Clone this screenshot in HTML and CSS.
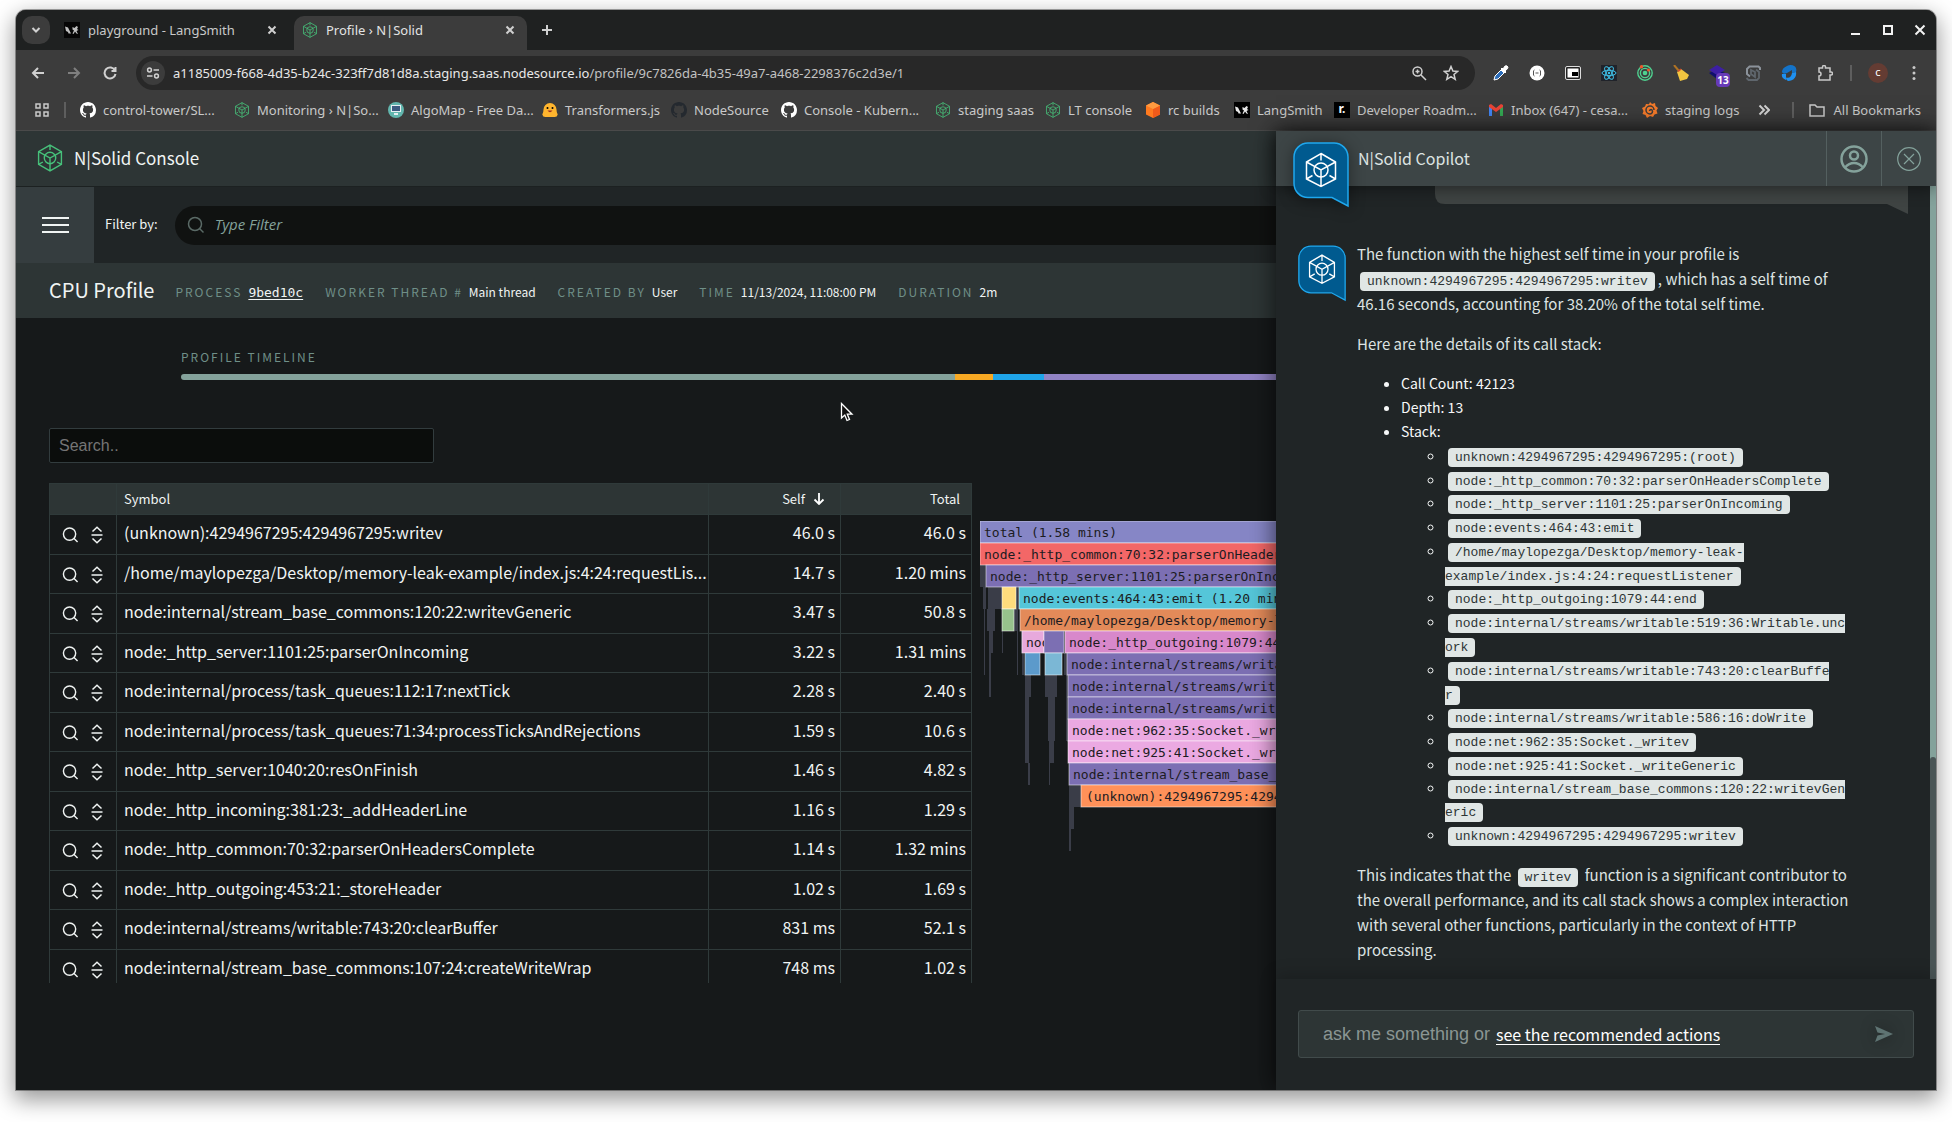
FILE: index.html
```html
<!DOCTYPE html>
<html lang="en">
<head>
<meta charset="utf-8">
<title>Profile › N|Solid</title>
<link rel="stylesheet" href="styles.css">
</head>
<body>
<svg class="defs" width="0" height="0" aria-hidden="true">
  <symbol id="cube" viewBox="0 0 24 26"><path d="M12 1 22.6 7v12L12 25 1.4 19V7zM12 1v4.5M12 13v12M1.4 7 12 13l10.600-6M1.400 19l4-2.300M22.600 19l-4-2.300" /><circle cx="12" cy="13" r="5.300"/></symbol>
  <symbol id="github" viewBox="0 0 16 16"><path d="M8 0C3.580 0 0 3.580 0 8c0 3.540 2.290 6.530 5.470 7.590.4.070.55-.17.55-.38 0-.19-.01-.82-.01-1.490-2.010.37-2.530-.49-2.690-.94-.09-.23-.48-.94-.82-1.130-.28-.15-.68-.52-.01-.53.63-.01 1.080.58 1.230.82.72 1.210 1.870.87 2.330.66.070-.52.28-.87.51-1.070-1.780-.2-3.640-.89-3.640-3.950 0-.87.31-1.590.82-2.150-.08-.2-.36-1.020.08-2.120 0 0 .67-.21 2.200.82.64-.18 1.320-.27 2-.27s1.360.09 2 .27c1.530-1.040 2.200-.82 2.200-.82.44 1.100.16 1.920.08 2.120.51.56.82 1.270.82 2.150 0 3.070-1.870 3.750-3.650 3.950.29.25.54.73.54 1.480 0 1.070-.01 1.930-.01 2.200 0 .21.15.46.55.38A8.010 8.010 0 0 0 16 8c0-4.420-3.580-8-8-8z"/></symbol>
  <symbol id="langsmith" viewBox="0 0 16 16"><path fill="#000" d="M0 0h16v16H0z"/><path fill="#e8e8e8" d="M1 4.500l3 1 1.500 3 1.500 3H4.500l-.5-1.500-2-1zM8.500 5l2 1 2-2 1.500 1-1 2 1.500 1-2 1 1.500 3-1.500-.5-1.500-2-1.500 2.500-1-.5 1.500-3-1.500-1z"/></symbol>
  <symbol id="x" viewBox="0 0 10 10"><path d="M1.500 1.500l7 7M8.500 1.500l-7 7"/></symbol>
  <symbol id="search" viewBox="0 0 18 18"><circle cx="8" cy="8" r="6.500"/><path d="M12.500 12.500 16.500 16.500"/></symbol>
  <symbol id="expand" viewBox="0 0 12 18"><path d="M1.500 5.500 6 1.200l4.500 4.300M.5 9h11M1.500 12.500 6 16.800l4.500-4.300"/></symbol>
  <symbol id="bubble" viewBox="0 0 56 66"><path fill="#005a8f" stroke="#1fa8ee" stroke-width="1.500" d="M15 1h26a14 14 0 0 1 14 14v49L39 55.500H15A14 14 0 0 1 1 41.500V15A14 14 0 0 1 15 1z"/><g fill="none" stroke="#fff" stroke-width="1.500"><path d="M28 11.500 42.500 20v17L28 44.500 13.500 37V20zM28 11.500v7M28 28v16.500M13.500 20 28 28l14.500-8M13.500 37l6-3.500M42.500 37l-6-3.500"/><circle cx="28" cy="28" r="7"/></g></symbol>
</svg>
<div class="window">
  <header class="chrome">
    <div class="tabs">
      <button class="tab-search" aria-label="Search tabs"><svg width="10" height="10" viewBox="0 0 10 10"><path d="M1.500 3 5 6.500 8.500 3"/></svg></button>
      <div class="tab"><svg class="fav dim" width="16" height="16"><use href="#langsmith"/></svg><span>playground - LangSmith</span><button aria-label="Close tab"><svg width="10" height="10"><use href="#x"/></svg></button></div>
      <div class="tab active"><svg class="fav cube" width="16" height="16"><use href="#cube"/></svg><span>Profile › N|Solid</span><button aria-label="Close tab"><svg width="10" height="10"><use href="#x"/></svg></button></div>
      <button class="new-tab" aria-label="New tab"><svg width="12" height="12" viewBox="0 0 12 12"><path d="M6 1v10M1 6h10"/></svg></button>
      <div class="controls">
        <button aria-label="Minimize"><svg width="12" height="12" viewBox="0 0 12 12"><path d="M1 10h9"/></svg></button>
        <button aria-label="Maximize"><svg width="12" height="12" viewBox="0 0 12 12"><path d="M2 2h8v8H2z"/></svg></button>
        <button aria-label="Close"><svg width="12" height="12" viewBox="0 0 12 12"><path d="M1.500 1.500l9 9M10.500 1.500l-9 9"/></svg></button>
      </div>
    </div>
    <div class="toolbar">
      <div class="nav">
        <button aria-label="Back"><svg width="14" height="14" viewBox="0 0 14 14"><path d="M13 7H2M7 2 2 7l5 5"/></svg></button>
        <button class="off" aria-label="Forward"><svg width="14" height="14" viewBox="0 0 14 14"><path d="M1 7h11M7 2l5 5-5 5"/></svg></button>
        <button aria-label="Reload"><svg width="14" height="14" viewBox="0 0 14 14"><path d="M12 4.500A5.500 5.500 0 1 0 12.500 8M12.500 1v4h-4"/></svg></button>
      </div>
      <div class="url">
        <button class="site" aria-label="Site information"><svg width="14" height="14" viewBox="0 0 14 14"><circle cx="3.500" cy="4" r="1.900"/><path d="M7.500 4H13M1 10h5.500"/><circle cx="10.500" cy="10" r="1.900"/></svg></button>
        <span class="address">a1185009-f668-4d35-b24c-323ff7d81d8a.staging.saas.nodesource.io<span>/profile/9c7826da-4b35-49a7-a468-2298376c2d3e/1</span></span>
        <button aria-label="Zoom"><svg width="16" height="16" viewBox="0 0 16 16"><circle cx="6.500" cy="6.500" r="4.500"/><path d="M10 10l5 5M4.500 6.500h4M6.500 4.500v4"/></svg></button>
        <button aria-label="Bookmark this tab"><svg width="16" height="16" viewBox="0 0 16 16"><path d="M8 1.500 9.900 6l4.800.400-3.700 3.100 1.200 4.800L8 11.700l-4.200 2.600L5 9.500 1.300 6.400 6.100 6z"/></svg></button>
      </div>
      <div class="exts">
        <svg viewBox="0 0 16 16"><path d="M1 15l1-4 6-6 3 3-6 6z" fill="#2b6cb8" stroke="#fff"/><path d="M8 4l1-1 1 1 2-3q2-1 3 1 0 2-2 3l-1 1 1 1-1 1z" fill="#fff" stroke="#fff"/></svg>
        <svg viewBox="0 0 16 16"><circle cx="8" cy="8" r="7.500" fill="#fff"/><path d="M5.500 5Q4 5 4.500 8 4 11 5.500 11M10.500 5Q12 5 11.500 8q.5 3-1 3M6.500 8h3" fill="none" stroke="#555"/></svg>
        <svg viewBox="0 0 16 16"><rect x=".5" y="1.500" width="15" height="13" rx="1.500" fill="#222" stroke="#ddd"/><path fill="#fff" d="M2.500 3.500h11v9h-11z"/><path d="M7 7h6v4H7z"/></svg>
        <svg viewBox="0 0 16 16"><path fill="#20232a" d="M0 0h16v16H0z"/><g fill="none" stroke="#3fc1e8"><ellipse cx="8" cy="8" rx="7" ry="2.700"/><ellipse cx="8" cy="8" rx="7" ry="2.700" transform="rotate(60 8 8)"/><ellipse cx="8" cy="8" rx="7" ry="2.700" transform="rotate(120 8 8)"/></g><circle cx="8" cy="8" r="1.200" fill="#3fc1e8"/></svg>
        <svg viewBox="0 0 16 16"><g fill="none" stroke="#4fd08f" stroke-width="1.400"><circle cx="8" cy="8" r="7.200"/><circle cx="8" cy="8" r="4.600"/></g><circle cx="8" cy="8" r="2.300" fill="#4fd08f"/><circle cx="4.500" cy="1.800" r="1.700" fill="#f0562b"/><circle cx="11.500" cy="5" r="1.500" fill="#f0562b"/></svg>
        <svg viewBox="0 0 16 16"><path d="M1 0l5 6" stroke="#b07324" stroke-width="2"/><path d="M4 7l4-3 8 6-2 4-7 2z" fill="#f2c640"/><path d="M5 6.500 8 4" stroke="#d6462d" stroke-width="1.500"/></svg>
        <span class="stack"><svg viewBox="0 0 16 16"><path d="M0 8l8-4 8 4-8 6z" fill="#10106b"/><path d="M0 5l8-5 8 5-8 5z" fill="#3d1fa4"/></svg><b>13</b></span>
        <svg viewBox="0 0 16 16"><path d="M15 5V3l-1.500-1.500h-9L2 4v5l3 2.500" fill="none" stroke="#8b929a" stroke-width="2"/><path d="M11 4.500 14 7v6l-2 2H3.500L1.500 13M6 5v4l4 3V7z" fill="none" stroke="#5f666d" stroke-width="1.800"/></svg>
        <svg viewBox="0 0 16 16"><path d="M6 1q4-2 8 .5 2 2 1 5.500l-4 1V5L6 8Q2 10 1 7q0-4 5-6z" fill="#1473c8"/><path d="M15 7q1 6-5 8.500-5 1.500-5-3 5 1.500 6-4.500zM1 9l4 0v6q-5-2-4-6z" fill="#1e90f0"/></svg>
        <svg viewBox="0 0 16 16"><path d="M2 3h3.500V2a1.500 1.500 0 0 1 3 0v1H13v4h1a1.500 1.500 0 0 1 0 3h-1v5H2v-4q2 0 2-2t-2-2z" fill="none" stroke="#c9c9c9" stroke-width="1.500"/></svg>
        <i class="bar"></i>
        <span class="avatar">c</span>
        <svg class="dots" viewBox="0 0 16 16"><circle cx="8" cy="2.500" r="1.500"/><circle cx="8" cy="8" r="1.500"/><circle cx="8" cy="13.500" r="1.500"/></svg>
      </div>
    </div>
    <nav class="bookmarks">
      <svg class="apps" width="16" height="16" viewBox="0 0 16 16"><path d="M2 2h4v4H2zM10 2h4v4h-4zM2 10h4v4H2zM10 10h4v4h-4z"/></svg>
      <i class="bar"></i>
      <div class="links">
        <a href="#"><svg class="white"><use href="#github"/></svg>control-tower/SL...</a>
        <a href="#"><svg class="cube"><use href="#cube"/></svg>Monitoring › N|So...</a>
        <a href="#"><svg viewBox="0 0 16 16"><circle cx="8" cy="8" r="8" fill="#62b6ae"/><path fill="#e6eef2" d="M3 3h10v7H3zM6 11h4v2H6z"/><path fill="#3b5b80" d="M4 4h8v5H4z"/></svg>AlgoMap - Free Da...</a>
        <a href="#"><svg viewBox="0 0 16 16"><path d="M8 1a6.500 6.500 0 0 1 6.500 6.500q0 3 1.200 5-.5 2.500-3 2.500H3.300Q.8 15 .3 12.500q1.200-2 1.200-5A6.500 6.500 0 0 1 8 1z" fill="#ffb52e"/><circle cx="5.500" cy="6" r="1"/><circle cx="10.500" cy="6" r="1"/><path d="M5.500 8.500q2.500 3.500 5 0z" fill="#a03020"/></svg>Transformers.js</a>
        <a href="#"><svg class="dark"><use href="#github"/></svg>NodeSource</a>
        <a href="#"><svg class="white"><use href="#github"/></svg>Console - Kubern...</a>
        <a href="#"><svg class="cube"><use href="#cube"/></svg>staging saas</a>
        <a href="#"><svg class="cube"><use href="#cube"/></svg>LT console</a>
        <a href="#"><svg viewBox="0 0 16 16"><path d="M8 0l7 3.500v9L8 16l-7-3.500v-9z" fill="#ff7a1f"/><path d="M8 7l7-3.500v9L8 16z" fill="#f05a1a"/><path d="M8 0l7 3.500L8 7 1 3.500z" fill="#ff9a40"/></svg>rc builds</a>
        <a href="#"><svg><use href="#langsmith"/></svg>LangSmith</a>
        <a href="#"><span class="rm">r.</span>Developer Roadm...</a>
        <a href="#"><svg viewBox="0 0 16 16"><path fill="#4285f4" d="M1 4l3 2v8H1z"/><path fill="#34a853" d="M12 6l3-2v10h-3z"/><path fill="#ea4335" d="M1 3l2-1 5 4 5-4 2 1v2l-7 5-7-5z"/></svg>Inbox (647) - cesa...</a>
        <a href="#"><svg viewBox="0 0 16 16"><path d="M8 0l2 2 3-1 .5 3L16 6l-1.500 2.500 1 3-3 1L11 15l-3-1-3 2-1.500-3-3-1 1-3L0 6l3-1.500L4 2l3 .3z" fill="#f47a2a"/><path d="M12 8a4 4 0 1 0-4 4 2.500 2.500 0 0 0 2-4 1.500 1.500 0 0 0-2.500 1" fill="none" stroke="#3c3c3c" stroke-width="1.500"/></svg>staging logs</a>
      </div>
      <button class="more" aria-label="More bookmarks"><svg width="12" height="12" viewBox="0 0 12 12"><path d="M1.500 1.500 6 6l-4.500 4.500M6.500 1.500 11 6l-4.500 4.500"/></svg></button>
      <i class="bar"></i>
      <a class="all" href="#"><svg viewBox="0 0 16 16"><path d="M1 3h5l2 2h7v9H1z" fill="none" stroke="#c9c9c9" stroke-width="1.500"/></svg>All Bookmarks</a>
    </nav>
  </header>

  <div class="app">
    <div class="brand"><svg class="cube" width="26" height="28"><use href="#cube"/></svg><span>N|Solid Console</span></div>
    <div class="filter">
      <button class="burger" aria-label="Menu"><i></i><i></i><i></i></button>
      <label for="filter">Filter by:</label>
      <div class="pill"><svg width="18" height="18"><use href="#search"/></svg><input id="filter" type="text" placeholder="Type Filter"></div>
    </div>
    <div class="title">
      <h1>CPU Profile</h1>
      <dl>
        <div><dt>Process</dt><dd><a href="#">9bed10c</a></dd></div>
        <div><dt>Worker thread #</dt><dd>Main thread</dd></div>
        <div><dt>Created by</dt><dd>User</dd></div>
        <div><dt>Time</dt><dd>11/13/2024, 11:08:00 PM</dd></div>
        <div><dt>Duration</dt><dd>2m</dd></div>
      </dl>
    </div>
    <main>
      <section class="timeline">
        <h2>Profile timeline</h2>
        <div class="track"><i style="width:48.700%"></i><i style="width:2.400%"></i><i style="width:3.200%"></i><i style="width:45.700%"></i></div>
      </section>
      <input class="find" type="text" placeholder="Search.." aria-label="Search">
      <div class="profile">
        <div class="scroller">
          <table>
            <thead><tr><th></th><th>Symbol</th><th>Self<svg width="12" height="12" viewBox="0 0 12 12"><path d="M6 0v11M1.500 6.500 6 11l4.500-4.500"/></svg></th><th>Total</th></tr></thead>
            <tbody>
              <tr><td><svg><use href="#search"/></svg><svg><use href="#expand"/></svg></td><td>(unknown):4294967295:4294967295:writev</td><td>46.0 s</td><td>46.0 s</td></tr>
              <tr><td><svg><use href="#search"/></svg><svg><use href="#expand"/></svg></td><td>/home/maylopezga/Desktop/memory-leak-example/index.js:4:24:requestLis...</td><td>14.7 s</td><td>1.20 mins</td></tr>
              <tr><td><svg><use href="#search"/></svg><svg><use href="#expand"/></svg></td><td>node:internal/stream_base_commons:120:22:writevGeneric</td><td>3.47 s</td><td>50.8 s</td></tr>
              <tr><td><svg><use href="#search"/></svg><svg><use href="#expand"/></svg></td><td>node:_http_server:1101:25:parserOnIncoming</td><td>3.22 s</td><td>1.31 mins</td></tr>
              <tr><td><svg><use href="#search"/></svg><svg><use href="#expand"/></svg></td><td>node:internal/process/task_queues:112:17:nextTick</td><td>2.28 s</td><td>2.40 s</td></tr>
              <tr><td><svg><use href="#search"/></svg><svg><use href="#expand"/></svg></td><td>node:internal/process/task_queues:71:34:processTicksAndRejections</td><td>1.59 s</td><td>10.6 s</td></tr>
              <tr><td><svg><use href="#search"/></svg><svg><use href="#expand"/></svg></td><td>node:_http_server:1040:20:resOnFinish</td><td>1.46 s</td><td>4.82 s</td></tr>
              <tr><td><svg><use href="#search"/></svg><svg><use href="#expand"/></svg></td><td>node:_http_incoming:381:23:_addHeaderLine</td><td>1.16 s</td><td>1.29 s</td></tr>
              <tr><td><svg><use href="#search"/></svg><svg><use href="#expand"/></svg></td><td>node:_http_common:70:32:parserOnHeadersComplete</td><td>1.14 s</td><td>1.32 mins</td></tr>
              <tr><td><svg><use href="#search"/></svg><svg><use href="#expand"/></svg></td><td>node:_http_outgoing:453:21:_storeHeader</td><td>1.02 s</td><td>1.69 s</td></tr>
              <tr><td><svg><use href="#search"/></svg><svg><use href="#expand"/></svg></td><td>node:internal/streams/writable:743:20:clearBuffer</td><td>831 ms</td><td>52.1 s</td></tr>
              <tr><td><svg><use href="#search"/></svg><svg><use href="#expand"/></svg></td><td>node:internal/stream_base_commons:107:24:createWriteWrap</td><td>748 ms</td><td>1.02 s</td></tr>
            </tbody>
          </table>
        </div>
        <svg class="flame">
          <g fill="#3a3d48">
            <path d="M0 44h6v22H0zM3 66h3v22H3zM8 66h14v22H8zM4 88h1v66H4zM7 88h8v22H7zM9 110h4v22H9zM9 132h2v44H9zM22 110h1v22h-1zM36 66h3v22h-3zM34 88h4v22h-4zM37 110h1v44h-1zM41 110h2v22h-2zM42 132h2v22h-2zM45 154h6v22h-6zM45 176h4v66h-4zM48 242h2v22h-2zM65 154h12v22H65zM68 176h7v44h-7zM69 220h5v22h-5zM69 242h1v22h-1zM84 132h3v22h-3zM86 154h2v66h-2zM89 264h12v22H89zM89 286h5v22h-5zM89 308h2v22h-2z"/>
          </g>
          <g class="bars">
            <rect x="0" y="0" width="790" height="22" fill="#8686c6"/><rect x="0" y="22" width="780" height="22" fill="#f36767"/>
            <rect x="6" y="44" width="770" height="22" fill="#7c6fb3"/>
            <rect x="22" y="66" width="14" height="22" fill="#ffdc7d"/><rect x="39" y="66" width="730" height="22" fill="#55c6d9"/>
            <rect x="22" y="88" width="12" height="22" fill="#97c28c"/><rect x="40" y="88" width="720" height="22" fill="#e38a59"/>
            <rect x="42" y="110" width="22" height="22" fill="#e7a9dc"/><rect x="64" y="110" width="20" height="22" fill="#7c6fb3"/><rect x="85" y="110" width="640" height="22" fill="#d888cb"/>
            <rect x="45" y="132" width="15" height="22" fill="#5c9acb"/><rect x="65" y="132" width="17" height="22" fill="#7bb7d5"/><rect x="87" y="132" width="640" height="22" fill="#7c6fb3"/>
            <rect x="88" y="154" width="640" height="22" fill="#7c6fb3"/><rect x="88" y="176" width="640" height="22" fill="#7c6fb3"/>
            <rect x="88" y="198" width="640" height="22" fill="#eba9e2"/><rect x="88" y="220" width="640" height="22" fill="#eba9e2"/>
            <rect x="89" y="242" width="640" height="22" fill="#7c6fb3"/><rect x="101" y="264" width="620" height="22" fill="#ff9159"/>
          </g>
          <g class="names">
            <text x="4" y="16">total (1.58 mins)</text>
            <text x="4" y="38">node:_http_common:70:32:parserOnHeadersComplete (1.32 mins)</text>
            <text x="10" y="60">node:_http_server:1101:25:parserOnIncoming (1.31 mins)</text>
            <text x="43" y="82">node:events:464:43:emit (1.20 mins)</text>
            <text x="44" y="104">/home/maylopezga/Desktop/memory-leak-example/index.js:4:24</text>
            <svg x="42" y="110" width="22" height="22"><text x="4" y="16">node</text></svg>
            <text x="89" y="126">node:_http_outgoing:1079:44:end</text>
            <text x="91" y="148">node:internal/streams/writable:519:36</text>
            <text x="92" y="170">node:internal/streams/writable:743:20</text>
            <text x="92" y="192">node:internal/streams/writable:586:16</text>
            <text x="92" y="214">node:net:962:35:Socket._writev</text>
            <text x="92" y="236">node:net:925:41:Socket._writeGeneric</text>
            <text x="93" y="258">node:internal/stream_base_commons:120:22</text>
            <text x="106" y="280">(unknown):4294967295:4294967295:writev</text>
          </g>
        </svg>
      </div>
    </main>

    <aside class="copilot">
      <header>
        <svg class="bubble big"><use href="#bubble"/></svg>
        <h2>N|Solid Copilot</h2>
        <button aria-label="Account"><svg width="28" height="28" viewBox="0 0 28 28" stroke-width="2.500"><circle cx="14" cy="14" r="12.500"/><circle cx="14" cy="10.500" r="4"/><path d="M5 22.500q4-4.500 9-4.500t9 4.500"/></svg></button>
        <button aria-label="Close"><svg width="24" height="24" viewBox="0 0 24 24" stroke-width="1.200"><circle cx="12" cy="12" r="11.300"/><path d="M7 7l10 10M17 7 7 17"/></svg></button>
      </header>
      <div class="chat">
        <div class="log">
          <svg class="asked" width="473" height="28" viewBox="0 0 473 28"><path d="M0 0h473v28l-21-10H10Q0 18 0 8z"/></svg>
          <div class="reply">
            <svg class="bubble"><use href="#bubble"/></svg>
            <article>
              <p>The function with the highest self time in your profile is <code>unknown:4294967295:4294967295:writev</code>, which has a self time of 46.16 seconds, accounting for 38.20% of the total self time.</p>
              <p>Here are the details of its call stack:</p>
              <ul>
                <li>Call Count: 42123</li>
                <li>Depth: 13</li>
                <li>Stack:
                  <ul>
                    <li><code>unknown:4294967295:4294967295:(root)</code></li>
                    <li><code>node:_http_common:70:32:parserOnHeadersComplete</code></li>
                    <li><code>node:_http_server:1101:25:parserOnIncoming</code></li>
                    <li><code>node:events:464:43:emit</code></li>
                    <li><code>/home/maylopezga/Desktop/memory-leak-example/index.js:4:24:requestListener</code></li>
                    <li><code>node:_http_outgoing:1079:44:end</code></li>
                    <li><code>node:internal/streams/writable:519:36:Writable.uncork</code></li>
                    <li><code>node:internal/streams/writable:743:20:clearBuffer</code></li>
                    <li><code>node:internal/streams/writable:586:16:doWrite</code></li>
                    <li><code>node:net:962:35:Socket._writev</code></li>
                    <li><code>node:net:925:41:Socket._writeGeneric</code></li>
                    <li><code>node:internal/stream_base_commons:120:22:writevGeneric</code></li>
                    <li><code>unknown:4294967295:4294967295:writev</code></li>
                  </ul>
                </li>
              </ul>
              <p>This indicates that the <code>writev</code> function is a significant contributor to the overall performance, and its call stack shows a complex interaction with several other functions, particularly in the context of HTTP processing.</p>
            </article>
          </div>
        </div>
        <div class="rail"><i></i></div>
      </div>
      <form>
        <div class="ask">
          <input type="text" placeholder="ask me something or" aria-label="Message">
          <a href="#">see the recommended actions</a>
          <button type="button" aria-label="Send"><svg width="18" height="18" viewBox="0 0 18 18"><path d="M0 1l18 8-18 8 2.500-6.500L10 9 2.500 7.500z"/></svg></button>
        </div>
      </form>
    </aside>
  </div>
  <svg class="pointer" width="14" height="20" viewBox="0 0 14 20"><path d="M1.500 1.500v14.500l3.300-3 2.200 5.500 2.500-1-2.200-5.300h4.700z" fill="#111" stroke="#fff" stroke-width="1.300"/></svg>
</div>
</body>
</html>
```
FILE: styles.css
```css
* { box-sizing: border-box; }
html, body { height: 100%; margin: 0; }
body {
  display: flex;
  padding: 10px 16px 32px;
  background: #fff;
  color: #f0f4f3;
  font: 16px/24px "Noto Sans CJK SC", "Noto Sans", sans-serif;
}
button { padding: 0; border: 0; background: none; color: inherit; font: inherit; display: flex; align-items: center; justify-content: center; }
input { border: 0; outline: 0; background: none; }
h1, h2, dl, dd, p, ul { margin: 0; font-weight: 400; }
a { color: inherit; text-decoration: none; }
svg { display: block; flex: none; }
.defs { position: absolute; }
.cube { fill: none; stroke: #46c07a; stroke-width: 1.300; }

.window {
  position: relative;
  flex: 1;
  min-width: 0;
  display: flex;
  flex-direction: column;
  overflow: hidden;
  border-radius: 10px 10px 0 0;
  background: #16191a;
  box-shadow: 0 0 0 1px #0005, 0 8px 22px 2px #0006;
}

/* browser frame */
.chrome { background: #3c3c3c; color: #c9c9c9; font: 13px/20px "Noto Sans", sans-serif; border-bottom: 1px solid #4a4a4a; }
.chrome button svg { fill: none; stroke: #d0d0d0; stroke-width: 2; }
.tabs { display: flex; height: 40px; padding: 6px 10px 0 6px; background: #1f2121; }
.tab-search { width: 28px; height: 28px; border-radius: 10px; background: #3c3c3c; }
.tab { display: flex; align-items: center; gap: 8px; width: 233px; height: 34px; padding: 0 12px 6px 8px; margin-left: 6px; }
.tab span { flex: 1; white-space: nowrap; }
.tab.active { margin-left: 5px; border-radius: 10px 10px 0 0; background: #3c3c3c; color: #e3e3e3; }
.tab .dim { opacity: .8; }
.new-tab { width: 40px; height: 28px; }
.controls { display: flex; gap: 20px; margin-left: auto; height: 28px; }
.controls button svg { stroke: #f2f2f2; }
.toolbar { display: flex; align-items: center; height: 46px; padding: 0 14px 0 12px; }
.nav { display: flex; width: 108px; }
.nav button { width: 20px; height: 20px; margin-right: 16px; }
.nav .off { opacity: .45; }
.url { flex: 1; display: flex; align-items: center; gap: 16px; height: 34px; padding: 0 16px 0 5px; border-radius: 17px; background: #282828; }
.url .site { width: 24px; height: 24px; border-radius: 12px; background: #3c3c3c; }
.url button svg { stroke-width: 1.500; }
.address { flex: 1; margin-left: -8px; color: #e8e8e8; }
.address span { color: #c2c2c2; }
.exts { display: flex; align-items: center; gap: 20px; margin-left: 18px; }
.exts svg { width: 16px; height: 16px; }
.exts .dots { fill: #c9c9c9; }
.bar { width: 2px; height: 16px; background: #5e5e5e; }
.exts .bar { margin: 0 -4px 0 -3px; }
.stack { position: relative; }
.stack b { position: absolute; left: 7px; top: 8px; width: 14px; border-radius: 4px; background: #673ab7; color: #fff; font-size: 10px; line-height: 14px; text-align: center; }
.avatar { width: 20px; height: 20px; margin-right: -2px; border-radius: 10px; background: #643c33; color: #fff; font-size: 11px; line-height: 18px; text-align: center; }
.bookmarks { display: flex; align-items: center; height: 34px; padding: 0 15px 7px 18px; }
.apps { fill: none; stroke: #c9c9c9; stroke-width: 1.500; }
.bookmarks .bar { margin-left: 14px; }
.bookmarks svg, .rm { flex: none; width: 16px; height: 16px; }
.bookmarks a { display: flex; align-items: center; gap: 7px; white-space: nowrap; }
.links { flex: 1; display: grid; grid-template-columns: 154px 154px 154px 129px 110px 154px 110px 100px 89px 100px 154px 154px 1fr; margin-left: 14px; }
.white { fill: #fff; }
.dark { fill: #24292f; }
.rm { background: #000; color: #fff; font-weight: 700; font-size: 12px; line-height: 14px; text-align: center; }
.bookmarks .more svg { width: 12px; height: 12px; }
.bookmarks .more + .bar { margin-left: 22px; }
.bookmarks .all { margin-left: 15px; gap: 8px; }

/* console page */
.app { position: relative; flex: 1; display: flex; flex-direction: column; min-height: 0; }
.brand { display: flex; align-items: center; gap: 11px; height: 56px; padding: 0 0 2px 21px; background: #2d3535; border-bottom: 1px solid #1c2121; font-size: 17px; }
.filter { display: flex; align-items: center; height: 76px; background: #202526; font-size: 13px; }
.burger { flex-direction: column; gap: 5px; width: 78px; height: 76px; background: #353d3f; }
.burger i { width: 27px; height: 2px; background: #f0f4f3; }
.filter label { margin: 0 17px 0 11px; padding-bottom: 2px; white-space: nowrap; }
.pill { flex: 1; display: flex; align-items: center; gap: 10px; height: 39px; padding-left: 12px; padding-bottom: 1px; border-radius: 20px 0 0 20px; background: #101211; }
.pill svg { fill: none; stroke: #5a6a66; stroke-width: 1.500; }
.pill input { flex: 1; padding: 0 0 1px; font: italic 15px/20px "Open Sans", sans-serif; }
.pill input::placeholder { color: #84a29b; }
.title { display: flex; align-items: center; gap: 21px; height: 55px; padding: 0 0 2px 33px; background: #2d3535; }
.title h1 { font-size: 20px; white-space: nowrap; }
.title dl { display: flex; gap: 22px; padding-top: 6px; font-size: 12px; line-height: 20px; white-space: nowrap; }
.title dl div { display: flex; gap: 6px; }
.title dt, .timeline h2 { color: #6f8f88; font-size: 12px; letter-spacing: 2px; text-transform: uppercase; }
.title dd a { font: 13px/20px "DejaVu Sans Mono", monospace; text-decoration: underline; text-underline-offset: 2px; }
main { flex: 1; padding: 29px 33px 0; overflow: hidden; }
.timeline { padding: 0 132px; }
.timeline h2 { line-height: 20px; }
.track { display: flex; height: 6px; margin-top: 7px; border-radius: 3px; overflow: hidden; }
.track i:nth-child(1) { background: #84a29b; }
.track i:nth-child(2) { background: #f7a823; }
.track i:nth-child(3) { background: #1fa4e8; }
.track i:nth-child(4) { background: #9183c4; }
.find { display: block; width: 385px; height: 35px; margin-top: 48px; padding: 0 9px; border: 1px solid #323c3e; border-radius: 2px; background: #0b0d0c; color: #fff; font: 16px "Liberation Sans", sans-serif; }
.find::placeholder { color: #757575; }
.profile { display: flex; gap: 8px; margin-top: 20px; }
.scroller { flex: none; width: 923px; height: 500px; overflow: hidden; }
table { width: 923px; border-collapse: collapse; table-layout: fixed; }
th, td { padding: 0 5px 0 7px; border: 1px solid #2f3a3a; text-align: right; font-weight: 400; white-space: nowrap; }
th { height: 31px; padding-right: 11px; background: #2d3535; font-size: 13px; line-height: 20px; }
th:nth-child(1) { width: 67px; }
th:nth-child(3) { width: 132px; padding-right: 15px; }
th:nth-child(4) { width: 131px; }
th:nth-child(2), td:nth-child(2) { text-align: left; }
th svg { display: inline-block; margin-left: 8px; vertical-align: -1px; fill: none; stroke: #fff; stroke-width: 1.800; }
td { height: 40px; line-height: 24px; padding-bottom: 5px; }
tr:nth-child(even) td { height: 39px; }
td:first-child { padding: 0 0 4px 12px; text-align: left; }
td svg { display: inline-block; width: 17px; height: 18px; fill: none; stroke: #f0f4f3; stroke-width: 1.500; vertical-align: middle; }
td svg + svg { width: 12px; margin-left: 12px; }
.flame { flex: 1; height: 340px; margin-top: 38px; overflow: hidden; }
.bars rect { stroke: #ffffff80; }
.names { fill: #1c1c22; font: 13px "DejaVu Sans Mono", monospace; }

/* assistant drawer */
.copilot {
  position: absolute; inset: 0 0 0 auto;
  width: 660px;
  display: flex;
  flex-direction: column;
  background: #202526;
  color: #dde3e2;
  box-shadow: 0 0 24px #000a;
}
.copilot header { position: relative; z-index: 1; display: flex; height: 55px; padding-left: 17px; background: #3d4546; box-shadow: 0 2px 16px #0007; }
.bubble { width: 48px; height: 57px; }
.bubble.big { width: 56px; height: 66px; margin-top: 11px; filter: drop-shadow(0 2px 8px #0006); }
.copilot h2 { flex: 1; margin-left: 9px; font-size: 16px; line-height: 55px; }
.copilot header button { width: 55px; border-left: 1px solid #546060; }
.copilot header button svg { fill: none; stroke: #84a29b; }
.chat { flex: 1; display: flex; min-height: 0; overflow: hidden; }
.log { flex: 1; }
.asked { margin-left: 159px; fill: #3f4443; }
.reply { display: flex; gap: 11px; padding: 27px 73px 0 22px; }
.reply .bubble { margin-top: 4px; }
article { flex: 1; font-size: 15px; overflow-wrap: anywhere; }
article p { line-height: 25px; margin-bottom: 15px; }
article ul { margin-bottom: 16px; padding-left: 44px; font-size: 14px; line-height: 24px; }
article ul ul { margin: 0; padding: 0 11px 0 44px; list-style: circle; }
article ul ul li:nth-child(3n) { line-height: 23px; }
article > ul > li { color: #f6f8f8; }
code { margin: 0 3px; padding: 2px 7px; border-radius: 4px; background: #e0e6e5; color: #2d3535; font: 13px "Liberation Mono", monospace; }
.rail { width: 6px; background: #84a29b; display: flex; align-items: flex-end; }
.rail i { width: 6px; height: 28%; border-radius: 3px 3px 0 0; background: #4a5556; }
.copilot form { padding: 31px 22px 32px; box-shadow: 0 -4px 16px #0003; }
.ask { display: flex; align-items: center; height: 48px; padding: 0 20px 0 24px; border: 1px solid #414b4b; border-radius: 3px; background: #2d3535; }
.ask input { width: 173px; padding: 0; font: 18px "Liberation Sans", sans-serif; }
.ask input::placeholder { color: #8a9593; }
.ask a { color: #fff; border-bottom: 1px solid #fff; line-height: 20px; white-space: nowrap; }
.ask button { margin-left: auto; }
.ask button svg { fill: #5f7473; filter: drop-shadow(0 0 8px #0006); }
.pointer { position: absolute; left: 824px; top: 392px; }
```
